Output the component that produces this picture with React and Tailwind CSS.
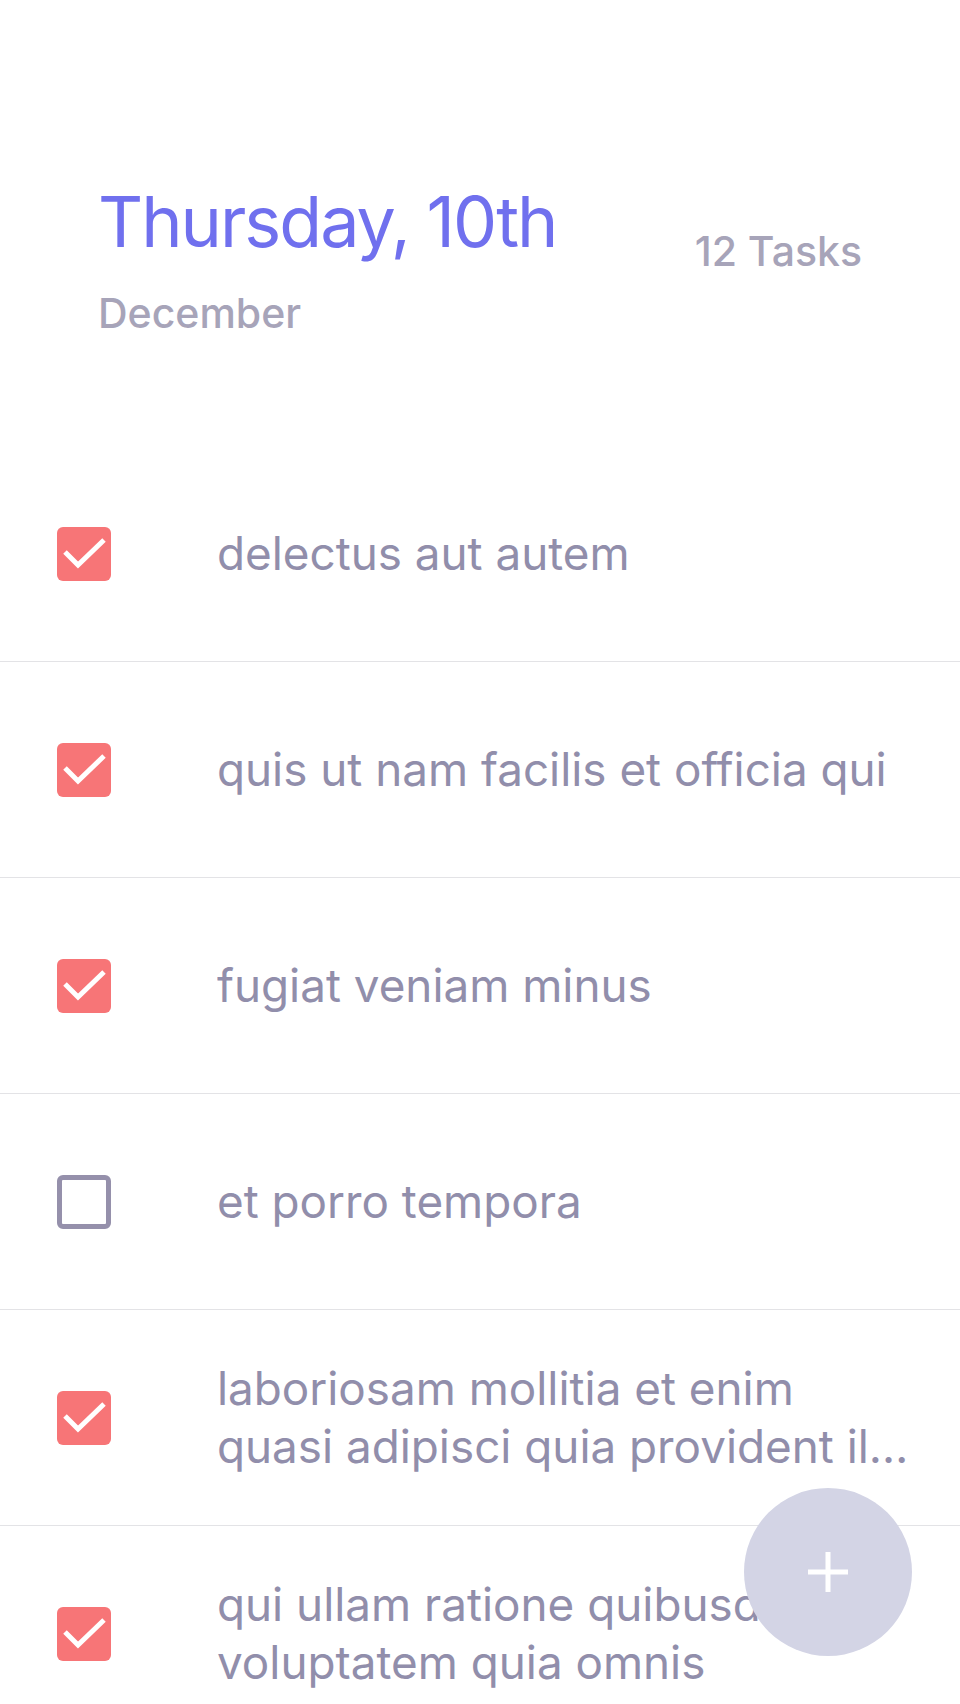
import React from "react";

const items = [
  { lines: ["delectus aut autem"], done: true },
  { lines: ["quis ut nam facilis et officia qui"], done: true },
  { lines: ["fugiat veniam minus"], done: true },
  { lines: ["et porro tempora"], done: false },
  { lines: ["laboriosam mollitia et enim", "quasi adipisci quia provident illum"], done: true },
  { lines: ["qui ullam ratione quibusdam", "voluptatem quia omnis"], done: true },
];

function Check({ done }) {
  if (done) {
    return (
      <div className="w-[54px] h-[54px] rounded-[6px] bg-[#f77577] shrink-0 flex items-center justify-center">
        <svg width="54" height="54" viewBox="0 0 54 54">
          <path d="M8 25 L21 38 L47 13" fill="none" stroke="#ffffff" strokeWidth="5" />
        </svg>
      </div>
    );
  }
  return <div className="w-[54px] h-[54px] rounded-[6px] border-[5px] border-[#9590ab] shrink-0" />;
}

export default function App() {
  return (
    <div className="relative h-[1704px] overflow-hidden bg-white" style={{ fontFamily: "Inter, 'Noto Sans', sans-serif" }}>
      <div className="flex justify-between items-start px-[98px] pt-[178px]">
        <div className="flex flex-col">
          <div className="text-[70px] leading-[88px] text-[#7070ee] tracking-[-2px]">Thursday, 10th</div>
          <div className="text-[41px] leading-[50px] font-medium text-[#a7a4b9] mt-[22px]">December</div>
        </div>
        <div className="text-[41px] leading-[50px] font-medium text-[#a7a4b9] mt-[48px]">12 Tasks</div>
      </div>
      <div className="mt-[108px]">
        {items.map((it, i) => (
          <div key={i} className="h-[216px] flex items-center border-b border-[#e3e3e6] pl-[57px] pr-[48px]">
            <Check done={it.done} />
            <div className="ml-[106px] min-w-0 flex-1 flex flex-col text-[45.8px] leading-[58px] text-[#918eab]">
              {it.lines.map((l, j) => (
                <div key={j} className="truncate">{l}</div>
              ))}
            </div>
          </div>
        ))}
      </div>
      <button className="absolute right-[48px] bottom-[48px] w-[168px] h-[168px] rounded-full bg-[#d3d4e5] flex items-center justify-center">
        <svg width="44" height="44" viewBox="0 0 44 44">
          <path d="M22 2 V42 M2 22 H42" stroke="#ffffff" strokeWidth="5" />
        </svg>
      </button>
    </div>
  );
}
